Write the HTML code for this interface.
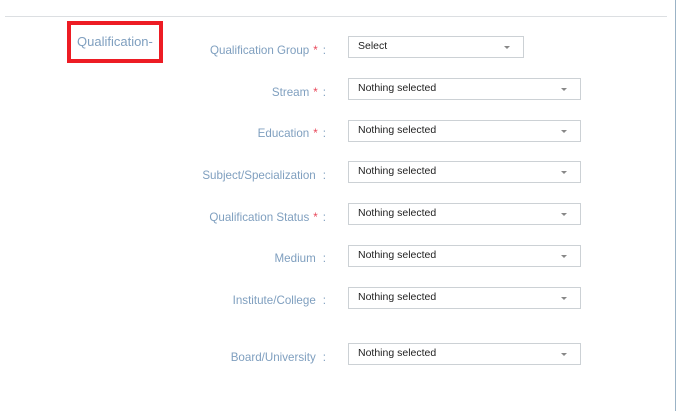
<!DOCTYPE html>
<html><head><style>
body{margin:0;width:680px;height:411px;background:#fff;position:relative;overflow:hidden;font-family:"Liberation Sans",Arial,sans-serif}
.hr{position:absolute;left:5px;top:16px;width:662px;height:1px;background:#dcdfe2}
.vr{position:absolute;left:675px;top:0;width:1px;height:411px;background:#9bb3c6}
.red{position:absolute;left:67px;top:21px;width:88px;height:34px;border:4px solid #ed1c24}
.red span{position:absolute;left:6px;top:9px;font-size:13px;color:#7f9fbf}
.lab{position:absolute;right:354px;font-size:11.6px;color:#7f9fbf;white-space:nowrap}
.lab b{color:#e8485a;font-weight:normal;margin:0 5px 0 4px}
.lab i{font-style:normal;margin-left:7px}
.box{position:absolute;left:348px;width:231px;height:20px;border:1px solid #ccd1d5;font-size:10.5px;color:#222}
.box span{position:absolute;left:9px;top:3px}
.box:after{content:"";position:absolute;right:13px;top:9px;border-left:3px solid transparent;border-right:3px solid transparent;border-top:3px solid #888}
</style></head><body>
<div class="hr"></div><div class="vr"></div>
<div class="red"><span>Qualification-</span></div>

<div class="lab" style="top:44px">Qualification Group<b>*</b>:</div>
<div class="box" style="top:36px;width:174px"><span>Select</span></div>

<div class="lab" style="top:86px">Stream<b>*</b>:</div>
<div class="box" style="top:78px"><span>Nothing selected</span></div>

<div class="lab" style="top:127px">Education<b>*</b>:</div>
<div class="box" style="top:120px"><span>Nothing selected</span></div>

<div class="lab" style="top:169px">Subject/Specialization<i>:</i></div>
<div class="box" style="top:161px"><span>Nothing selected</span></div>

<div class="lab" style="top:211px">Qualification Status<b>*</b>:</div>
<div class="box" style="top:203px"><span>Nothing selected</span></div>

<div class="lab" style="top:252px">Medium<i>:</i></div>
<div class="box" style="top:245px"><span>Nothing selected</span></div>

<div class="lab" style="top:294px">Institute/College<i>:</i></div>
<div class="box" style="top:287px"><span>Nothing selected</span></div>

<div class="lab" style="top:351px">Board/University<i>:</i></div>
<div class="box" style="top:343px"><span>Nothing selected</span></div>
</body></html>
